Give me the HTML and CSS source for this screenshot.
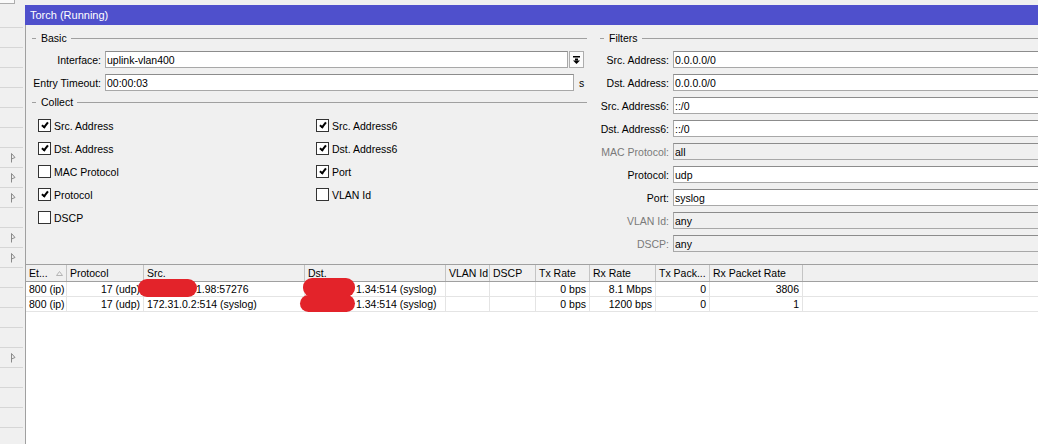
FILE: index.html
```html
<!DOCTYPE html>
<html>
  <head>
    <link rel="stylesheet" href="styles.css">
  </head>
  <body>
    <div class="app">
      <aside class="sidebar">
        <div class="sidebar-top"></div>
        <div class="nav-row"></div>
        <div class="nav-row"></div>
        <div class="nav-row"></div>
        <div class="nav-row"></div>
        <div class="nav-row"></div>
        <div class="nav-row"></div>
        <div class="nav-row"></div>
        <div class="nav-row"><svg class="flag" width="6" height="10" viewBox="0 0 6 10"><path d="M1.5 0.5V9.5M1.5 0.5L5 4.5L1.5 6"/></svg></div>
        <div class="nav-row"><svg class="flag" width="6" height="10" viewBox="0 0 6 10"><path d="M1.5 0.5V9.5M1.5 0.5L5 4.5L1.5 6"/></svg></div>
        <div class="nav-row"><svg class="flag" width="6" height="10" viewBox="0 0 6 10"><path d="M1.5 0.5V9.5M1.5 0.5L5 4.5L1.5 6"/></svg></div>
        <div class="nav-row"></div>
        <div class="nav-row"><svg class="flag" width="6" height="10" viewBox="0 0 6 10"><path d="M1.5 0.5V9.5M1.5 0.5L5 4.5L1.5 6"/></svg></div>
        <div class="nav-row"><svg class="flag" width="6" height="10" viewBox="0 0 6 10"><path d="M1.5 0.5V9.5M1.5 0.5L5 4.5L1.5 6"/></svg></div>
        <div class="nav-row"></div>
        <div class="nav-row"></div>
        <div class="nav-row"></div>
        <div class="nav-row"></div>
        <div class="nav-row"><svg class="flag" width="6" height="10" viewBox="0 0 6 10"><path d="M1.5 0.5V9.5M1.5 0.5L5 4.5L1.5 6"/></svg></div>
        <div class="nav-row"></div>
        <div class="nav-row"></div>
        <div class="nav-row"></div>
        <div class="nav-row"></div>
      </aside>

      <main class="window">
        <div class="titlebar">Torch (Running)</div>

        <div class="form">
          <div class="col-left">
            <div class="group-title">Basic</div>
            <div class="field">
              <label>Interface:</label>
              <input class="input-interface" type="text" value="uplink-vlan400">
              <button class="drop">
                <svg width="7" height="8" viewBox="0 0 7 8"><rect x="0" y="0" width="7" height="1.5"/><rect x="2" y="2.5" width="3" height="2"/><path d="M0 4.5H7L3.5 8Z"/></svg>
              </button>
            </div>
            <div class="field">
              <label>Entry Timeout:</label>
              <input class="input-timeout" type="text" value="00:00:03">
              <span class="unit">s</span>
            </div>

            <div class="group-title collect">Collect</div>
            <div class="checks">
              <div class="check"><span class="box on"></span>Src. Address</div>
              <div class="check"><span class="box on"></span>Dst. Address</div>
              <div class="check"><span class="box"></span>MAC Protocol</div>
              <div class="check"><span class="box on"></span>Protocol</div>
              <div class="check"><span class="box"></span>DSCP</div>
              <div class="check"><span class="box on"></span>Src. Address6</div>
              <div class="check"><span class="box on"></span>Dst. Address6</div>
              <div class="check"><span class="box on"></span>Port</div>
              <div class="check"><span class="box"></span>VLAN Id</div>
            </div>
          </div>

          <div class="col-right">
            <div class="group-title">Filters</div>
            <div class="field"><label>Src. Address:</label><input type="text" value="0.0.0.0/0"></div>
            <div class="field"><label>Dst. Address:</label><input type="text" value="0.0.0.0/0"></div>
            <div class="field"><label>Src. Address6:</label><input type="text" value="::/0"></div>
            <div class="field"><label>Dst. Address6:</label><input type="text" value="::/0"></div>
            <div class="field disabled"><label>MAC Protocol:</label><input type="text" value="all"></div>
            <div class="field"><label>Protocol:</label><input type="text" value="udp"></div>
            <div class="field"><label>Port:</label><input type="text" value="syslog"></div>
            <div class="field disabled"><label>VLAN Id:</label><input type="text" value="any"></div>
            <div class="field disabled"><label>DSCP:</label><input type="text" value="any"></div>
          </div>
        </div>

        <div class="list">
          <div class="list-head">
            <div class="hcell sorted">Et...<svg width="7" height="5" viewBox="0 0 7 5"><path d="M0.5 4.5H6.5L3.5 0.5Z"/></svg></div>
            <div class="hcell">Protocol</div>
            <div class="hcell">Src.</div>
            <div class="hcell">Dst.</div>
            <div class="hcell">VLAN Id</div>
            <div class="hcell">DSCP</div>
            <div class="hcell">Tx Rate</div>
            <div class="hcell">Rx Rate</div>
            <div class="hcell">Tx Pack...</div>
            <div class="hcell">Rx Packet Rate</div>
            <div class="hcell last"></div>
          </div>

          <div class="list-row">
            <div class="cell">800 (ip)</div>
            <div class="cell num">17 (udp)</div>
            <div class="cell masked-src">1.98:57276</div>
            <div class="cell masked-dst">1.34:514 (syslog)</div>
            <div class="cell"></div>
            <div class="cell"></div>
            <div class="cell num">0 bps</div>
            <div class="cell num">8.1 Mbps</div>
            <div class="cell num">0</div>
            <div class="cell num">3806</div>
            <div class="cell last"></div>
          </div>
          <div class="list-row">
            <div class="cell">800 (ip)</div>
            <div class="cell num">17 (udp)</div>
            <div class="cell">172.31.0.2:514 (syslog)</div>
            <div class="cell masked-dst">1.34:514 (syslog)</div>
            <div class="cell"></div>
            <div class="cell"></div>
            <div class="cell num">0 bps</div>
            <div class="cell num">1200 bps</div>
            <div class="cell num">0</div>
            <div class="cell num">1</div>
            <div class="cell last"></div>
          </div>

          <!-- redaction marks over the addresses -->
          <div class="blot blot-src"></div>
          <div class="blot blot-dst1"></div>
          <div class="blot blot-dst2"></div>
        </div>
      </main>
    </div>
  </body>
</html>
```

FILE: styles.css
```css
body {
  margin: 0;
  height: 444px;
  overflow: hidden;
  background: #f0f0f0;
  font-family: "Liberation Sans", Arial, sans-serif;
  font-size: 10.5px;
  color: #000;
}
.app {
  display: flex;
  height: 444px;
}

/* left strip */
.sidebar {
  width: 25px;
  flex: none;
}
.sidebar-top {
  width: 14px;
  height: 3px;
  background: #fafafa;
  border-right: 1px solid #adadad;
  border-bottom: 1px solid #adadad;
  margin-bottom: 4px;
}
.nav-row {
  width: 23px;
  height: 20px;
  box-sizing: border-box;
  border-bottom: 1px solid #d6d6d6;
  display: flex;
  align-items: center;
  padding-left: 10px;
}
.flag {
  fill: none;
  stroke: #8a8a8a;
  stroke-width: 1;
}

/* window */
.window {
  flex: 1;
  min-width: 0;
  display: flex;
  flex-direction: column;
  margin-top: 5px;
  border-left: 1px solid #a0a0a0;
}
.titlebar {
  height: 20px;
  line-height: 20px;
  margin-left: -1px;
  padding-left: 5px;
  background: #4f50cc;
  color: #fff;
  font-size: 11px;
}

.form {
  display: grid;
  grid-template-columns: 565px 1fr;
  padding: 6px 0 12px;
}
.col-left {
  margin-right: 4px;
}
.col-right {
  padding-left: 3px;
  min-width: 0;
}
.group-title {
  display: flex;
  align-items: center;
  height: 14px;
}
.group-title::before {
  content: "";
  width: 4px;
  border-top: 1px solid #a0a0a0;
  margin: 0 5px 0 6px;
}
.group-title::after {
  content: "";
  flex: 1;
  border-top: 1px solid #a0a0a0;
  margin-left: 4px;
}
.group-title.collect {
  margin-top: 4px;
}

.field {
  display: flex;
  align-items: center;
  height: 17px;
  margin-top: 6px;
}
.field label {
  width: 75px;
  flex: none;
  text-align: right;
}
.field input {
  height: 17px;
  box-sizing: border-box;
  margin: 0 0 0 4px;
  padding: 0 1px;
  border: 1px solid #a8a8a8;
  border-top-color: #8c8c8c;
  background: #fff;
  font: inherit;
  color: #000;
  outline: none;
}
.col-right .field input {
  width: 380px;
  flex: none;
}
.input-interface {
  width: 463px;
}
.input-timeout {
  width: 469px;
}
.field.disabled label {
  color: #7a7a7a;
}
.field.disabled input {
  background: #f0f0f0;
}
.drop {
  width: 15px;
  height: 17px;
  margin-left: 1px;
  padding: 0;
  border: 1px solid #adadad;
  background: #fbfbfb;
  display: flex;
  align-items: center;
  justify-content: center;
}
.drop svg {
  fill: #000;
}
.unit {
  margin-left: 5px;
}

.checks {
  display: grid;
  grid-template-columns: 278px auto;
  grid-template-rows: repeat(5, 23px);
  grid-auto-flow: column;
  margin: 5px 0 0 12px;
}
.check {
  display: flex;
  align-items: center;
}
.box {
  width: 13px;
  height: 13px;
  box-sizing: border-box;
  border: 1px solid #333;
  background: #fff;
  margin-right: 3px;
  position: relative;
}
.box.on::after {
  content: "";
  position: absolute;
  left: 4px;
  top: 1px;
  width: 2px;
  height: 5px;
  border: solid #000;
  border-width: 0 2px 2px 0;
  transform: rotate(38deg);
}

/* torch list */
.list {
  --cols: 41px 77px 161px 141px 44px 46px 54px 66px 54px 93px 1fr;
  flex: 1;
  position: relative;
  background: #fff;
  border-top: 1px solid #a0a0a0;
}
.list-head {
  display: grid;
  grid-template-columns: var(--cols);
  height: 17px;
  box-sizing: border-box;
  background: #f0f0f0;
  border-bottom: 1px solid #a0a0a0;
}
.hcell {
  border-right: 1px solid #c4c4c4;
  padding-left: 3px;
  line-height: 16px;
  white-space: nowrap;
  overflow: hidden;
}
.hcell.sorted {
  display: flex;
  align-items: center;
  justify-content: space-between;
  padding-right: 3px;
}
.hcell.sorted svg {
  fill: none;
  stroke: #b4b4b4;
}
.hcell.last,
.cell.last {
  border-right: none;
}
.list-row {
  display: grid;
  grid-template-columns: var(--cols);
  height: 15px;
  box-sizing: border-box;
  border-bottom: 1px solid #e4e4e4;
}
.cell {
  border-right: 1px solid #e4e4e4;
  padding: 0 3px;
  line-height: 14px;
  white-space: nowrap;
  overflow: hidden;
}
.cell.num {
  text-align: right;
}
.cell.masked-src {
  padding-left: 52px;
}
.cell.masked-dst {
  padding-left: 51px;
}
.blot {
  position: absolute;
  background: #e3232a;
  border-radius: 9px;
}
.blot-src {
  left: 112px;
  top: 14px;
  width: 59px;
  height: 18px;
}
.blot-dst1 {
  left: 277px;
  top: 13px;
  width: 52px;
  height: 19px;
}
.blot-dst2 {
  left: 274px;
  top: 30px;
  width: 55px;
  height: 17px;
}
```
